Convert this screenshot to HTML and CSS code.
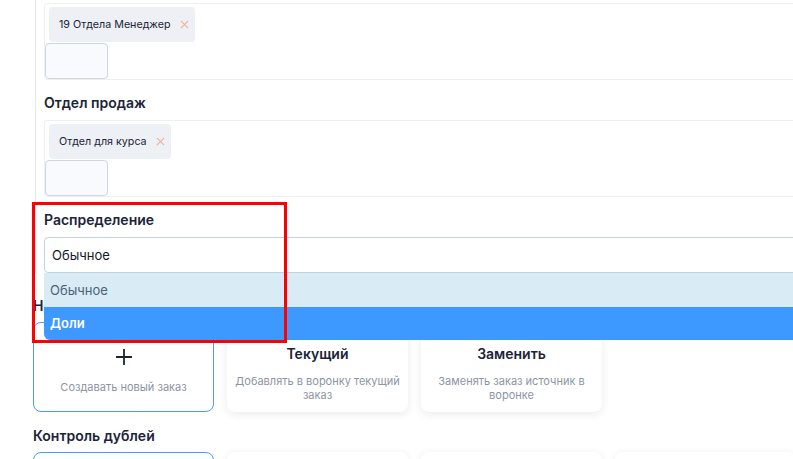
FILE: index.html
```html
<!DOCTYPE html>
<html lang="ru">
<head>
<meta charset="utf-8">
<title>Настройки</title>
<link rel="stylesheet" href="styles.css">
</head>
<body>
<div class="page">
  <div class="group">
    <div class="multi">
      <span class="tag">19 Отдела Менеджер
        <svg class="tag-x" viewBox="0 0 10 10" width="9" height="9"><path d="M1 1L9 9M9 1L1 9" stroke="#f5ab99" stroke-width="1.2" fill="none"/></svg>
      </span>
      <div class="mini-input"></div>
    </div>

    <div class="label">Отдел продаж</div>
    <div class="multi">
      <span class="tag">Отдел для курса
        <svg class="tag-x" viewBox="0 0 10 10" width="9" height="9"><path d="M1 1L9 9M9 1L1 9" stroke="#f5ab99" stroke-width="1.2" fill="none"/></svg>
      </span>
      <div class="mini-input"></div>
    </div>

    <div class="label">Распределение</div>
    <div class="select-wrap">
      <div class="select">Обычное</div>
      <ul class="dropdown">
        <li class="opt opt-hover">Обычное</li>
        <li class="opt opt-active">Доли</li>
      </ul>
    </div>
  </div>

  <div class="section-title first">Новый заказ</div>
  <div class="cards">
    <div class="card card-selected">
      <svg class="plus" viewBox="0 0 16 16" width="16" height="16"><path d="M8 0V16M0 8H16" stroke="#1b2437" stroke-width="1.8" fill="none"/></svg>
      <div class="card-desc plus-desc">Создавать новый заказ</div>
    </div>
    <div class="card">
      <div class="card-title">Текущий</div>
      <div class="card-desc">Добавлять в воронку текущий заказ</div>
    </div>
    <div class="card">
      <div class="card-title">Заменить</div>
      <div class="card-desc">Заменять заказ источник в воронке</div>
    </div>
  </div>

  <div class="section-title">Контроль дублей</div>
  <div class="cards">
    <div class="card card-selected"></div>
    <div class="card"></div>
    <div class="card"></div>
    <div class="card"></div>
  </div>

  <div class="annotation"></div>
</div>
</body>
</html>
```

FILE: styles.css
```css
* { box-sizing: border-box; }

html, body {
  margin: 0;
  padding: 0;
  background: #ffffff;
}

body {
  font-family: Inter, "Noto Sans", "Liberation Sans", sans-serif;
  color: #1b2437;
}

.page {
  position: relative;
  width: 793px;
  height: 459px;
  overflow: hidden;
  padding-left: 33px;
}

.group {
  margin-left: 2px;
  margin-right: -40px;
  border-left: 1px solid #e8e8e8;
  padding: 3px 0 0 8px;
}

.multi {
  display: flex;
  flex-direction: column;
  align-items: flex-start;
  border: 1px solid #efefef;
  border-radius: 3px;
}

.tag {
  display: inline-flex;
  align-items: center;
  height: 35px;
  margin: 3px 0 1px 4px;
  padding: 0 6px 0 10px;
  gap: 9px;
  background: #edf0f5;
  border-radius: 4px;
  font-size: 10.7px;
  font-weight: 400;
  color: #1b2437;
}

.tag-x { display: block; }

.mini-input {
  width: 63px;
  height: 36px;
  background: #f8fafd;
  border: 1px solid #cdd6e2;
  border-radius: 4px;
}

.label {
  margin: 13px 0 7px;
  font-size: 14px;
  line-height: 20px;
  font-weight: 600;
  color: #1b2437;
}

.select-wrap {
  position: relative;
}

.select {
  height: 36px;
  border: 1px solid #c6d1de;
  border-radius: 4px;
  padding: 0 7px;
  display: flex;
  align-items: center;
  font-size: 13px;
  color: #111827;
  background: #ffffff;
}

.dropdown {
  position: absolute;
  left: 0;
  right: 0;
  top: 36px;
  margin: 0;
  padding: 0;
  list-style: none;
  border-radius: 0 0 6px 6px;
  overflow: hidden;
  z-index: 5;
}

.opt {
  height: 33.5px;
  display: flex;
  align-items: center;
  padding: 0 6px;
  font-size: 13px;
}

.opt-hover {
  background: #d9ebf5;
  color: #4a6277;
}

.opt-active {
  background: #3d98ff;
  color: #ffffff;
  font-weight: 600;
}

.section-title {
  margin: 14px 0 6px;
  font-size: 14px;
  line-height: 20px;
  font-weight: 600;
  color: #1b2437;
}

.section-title.first {
  margin-top: 23px;
}

.cards {
  display: flex;
  gap: 13px;
}

.card {
  flex: 0 0 181px;
  height: 90px;
  border-radius: 8px;
  background: #ffffff;
  box-shadow: 0 2px 8px rgba(20, 30, 50, 0.09);
  padding: 22px 8px 0;
  text-align: center;
}

.card-selected {
  border: 1px solid #4a9dfb;
  box-shadow: none;
  padding-top: 21px;
}

.plus {
  display: block;
  margin: 5px auto 15px;
}

.card-title {
  font-size: 14px;
  line-height: 20px;
  font-weight: 600;
  color: #1b2437;
}

.card-desc {
  margin-top: 10px;
  font-size: 11px;
  line-height: 14px;
  color: #8c95a4;
}

.plus-desc { margin-top: 0; }

.annotation {
  position: absolute;
  left: 32px;
  top: 202px;
  width: 255px;
  height: 141px;
  border: 3px solid #ff0000;
  z-index: 10;
  pointer-events: none;
}
```
